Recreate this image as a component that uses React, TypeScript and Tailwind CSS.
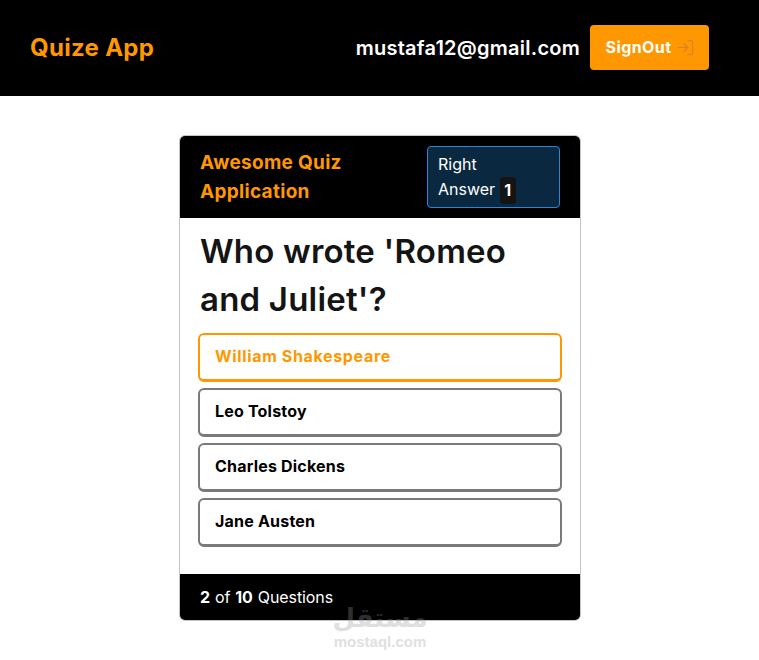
import { LogIn } from "lucide-react";

const answers = ["Leo Tolstoy", "Charles Dickens", "Jane Austen"];

export default function App() {
  return (
    <div className="relative min-h-[660px] overflow-hidden bg-white font-['Inter',sans-serif] text-[#212529]">
      <header className="flex h-[96px] items-center justify-between bg-black pb-[2px] pl-[30px] pr-[50px]">
        <a className="pt-[2px] text-[24px] font-bold tracking-[0.3px] text-[#ff9800]">Quize App</a>
        <div className="flex items-center gap-[10px]">
          <span className="pt-[2px] text-[20px] font-semibold tracking-[0.25px] text-white">mustafa12@gmail.com</span>
          <button
            type="button"
            className="flex h-[45px] w-[119px] items-center justify-center gap-[5px] rounded-[4px] bg-[#ff9800] pl-[2px] text-[16px] font-bold tracking-[0.4px] text-white"
          >
            SignOut
            <LogIn className="h-[19px] w-[19px] text-[#d9822b]" strokeWidth={1.5} />
          </button>
        </div>
      </header>

      <main className="flex justify-center pl-[1px] pt-[39px]">
        <section className="w-[402px] overflow-hidden rounded-[6px] border border-[#c4c4c4]">
          <div className="flex h-[82px] items-center justify-between bg-black px-[20px]">
            <h2 className="w-[200px] text-[19px] font-bold leading-[29px] tracking-[0.3px] text-[#ff9800]">
              Awesome Quiz Application
            </h2>
            <div className="h-[62px] w-[133px] rounded-[4px] border border-[#2f86d6] bg-[#0a2840] px-[10px] pt-[5px] text-[16px] leading-[25px] text-white">
              Right
              <br />
              Answer{" "}
              <span className="inline-block h-[27px] w-[16px] rounded-[4px] bg-[#141414] text-center align-middle text-[16px] font-bold leading-[27px]">
                1
              </span>
            </div>
          </div>

          <div className="h-[356px] bg-white">
            <h1 className="px-[20px] pt-[9px] text-[33px] font-semibold leading-[48px] tracking-[0.2px] text-[#141414]">
              Who wrote 'Romeo and Juliet'?
            </h1>
            <ul className="mt-[10px] flex flex-col gap-[6px] px-[18px]">
              <li className="flex h-[49px] items-center rounded-[6px] border-2 border-b-[3px] border-[#ff9800] pb-[2px] pl-[15px] text-[16px] font-bold tracking-[0.65px] text-[#ff9800]">
                William Shakespeare
              </li>
              {answers.map((answer) => (
                <li
                  key={answer}
                  className="flex h-[49px] items-center rounded-[6px] border-2 border-b-[3px] border-[#7a7a7a] pb-[2px] pl-[15px] text-[16px] font-bold tracking-[0.2px] text-black"
                >
                  {answer}
                </li>
              ))}
            </ul>
          </div>

          <div className="flex h-[46px] items-center bg-black pl-[20px] text-[16px] tracking-[-0.1px] text-white">
            <strong className="font-bold">2</strong>
            <span className="mx-[5px]">of</span>
            <strong className="font-bold">10</strong>
            <span className="ml-[5px]">Questions</span>
          </div>
        </section>
      </main>

      {/* mostaql watermark */}
      <div className="absolute left-[320px] top-[604px] flex w-[120px] flex-col items-center gap-[2px] opacity-30">
        <span className="font-['DejaVu_Sans',sans-serif] text-[26px] font-bold leading-[28px] text-[#999]">مستقل</span>
        <span className="font-['Liberation_Sans',sans-serif] text-[15px] font-bold leading-[15px] text-[#999]">mostaql.com</span>
      </div>
    </div>
  );
}
